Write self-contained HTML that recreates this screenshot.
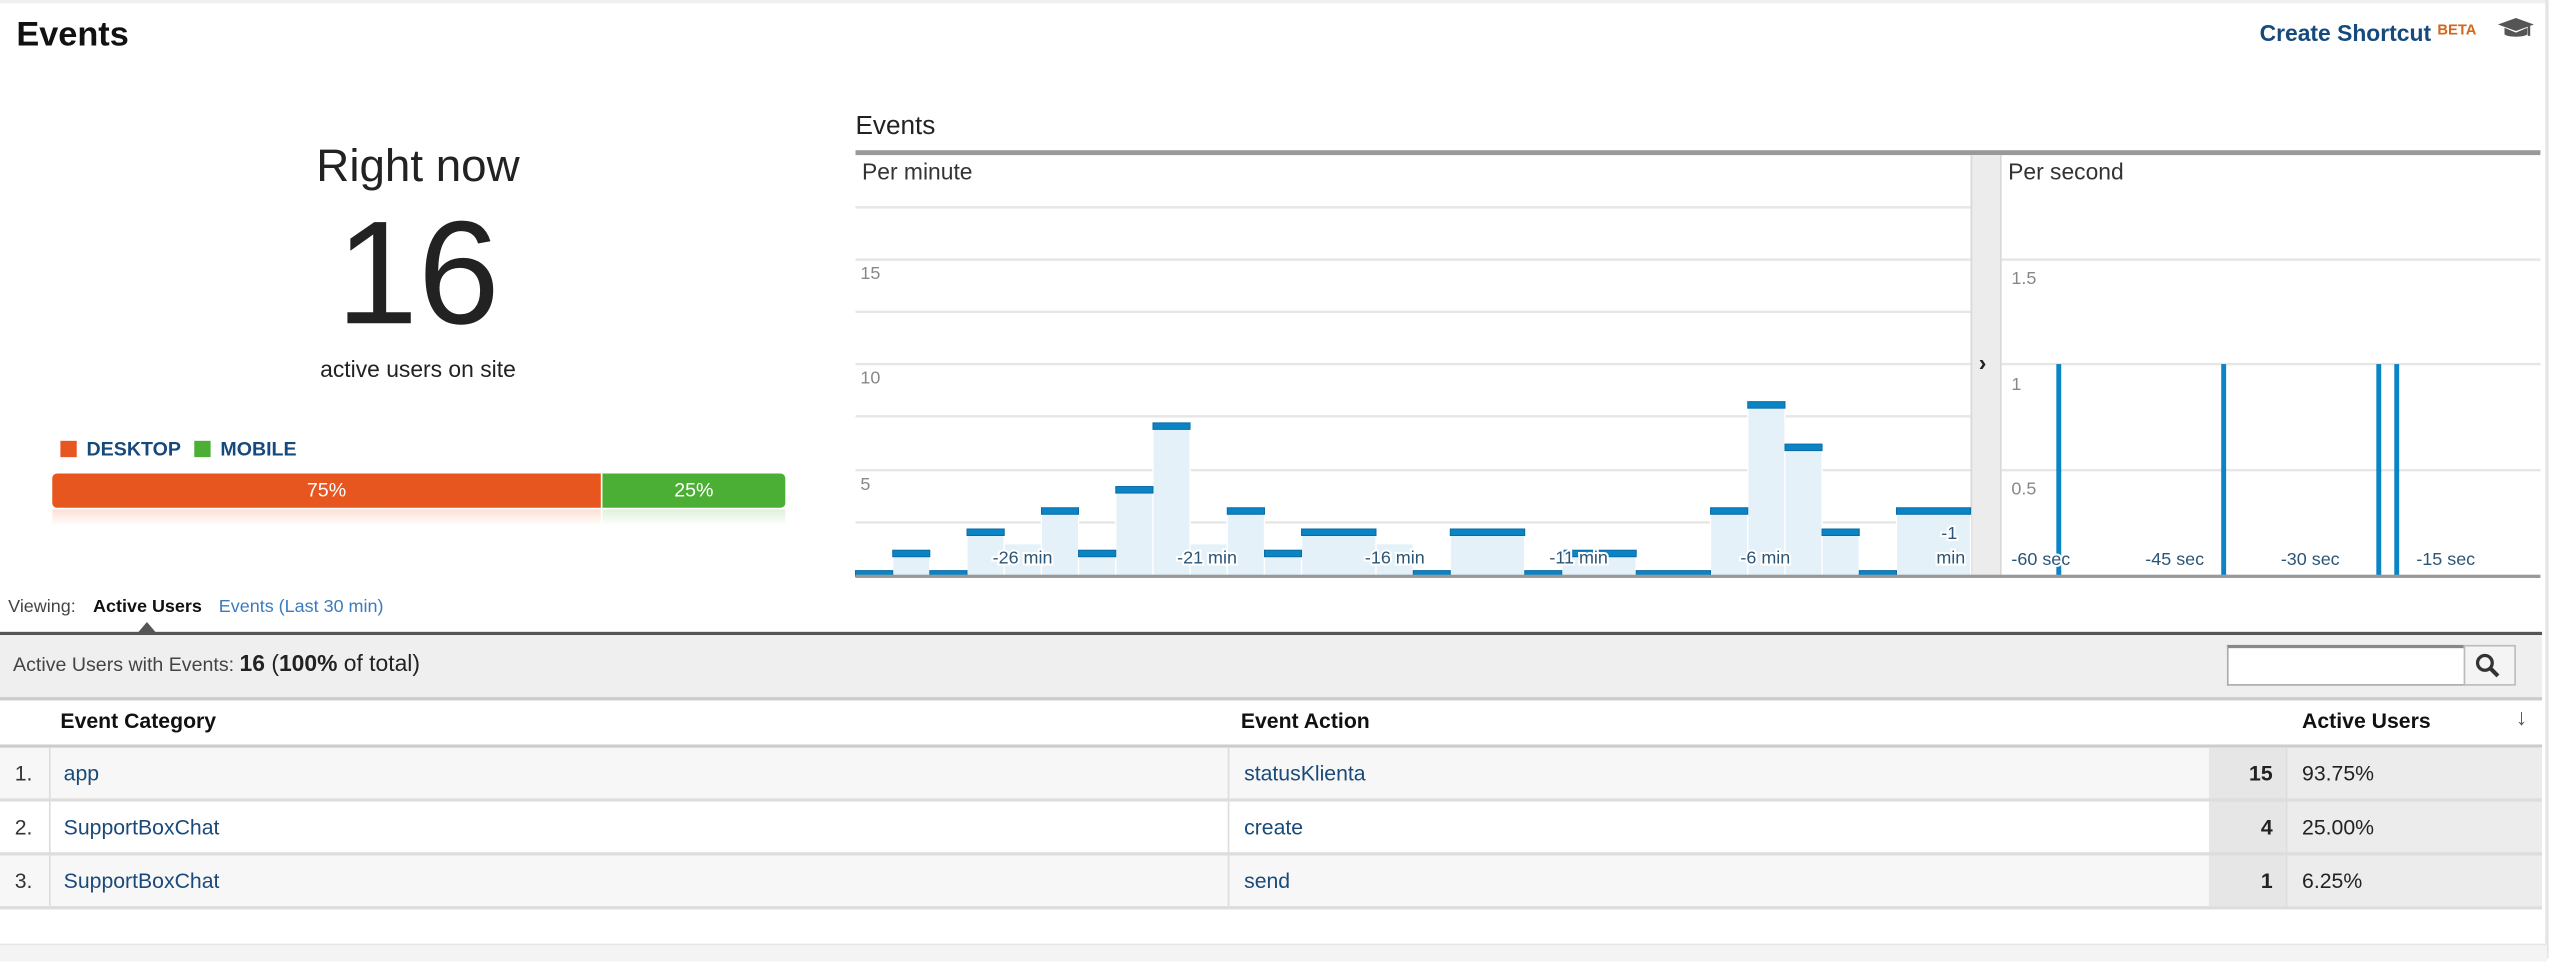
<!DOCTYPE html>
<html><head><meta charset="utf-8"><style>
html,body{margin:0;padding:0;background:#fff;overflow:hidden}
body{width:2560px;height:959px}
#w{position:absolute;left:0;top:0;width:1568px;height:588px;transform:scale(1.632653);transform-origin:0 0;font-family:"Liberation Sans",Arial,sans-serif;color:#222}
.a{position:absolute;white-space:nowrap}
</style></head><body><div id="w">
<div class="a" style="left:0;top:0;width:1560px;height:2px;background:#f0f0f0"></div>
<div class="a" style="left:1559px;top:0;width:2px;height:587px;background:#e4e4e4"></div>
<div class="a" style="left:10px;top:10px;font-size:21px;font-weight:bold;color:#111">Events</div>
<div class="a" style="left:1384px;top:12px;font-size:14px;font-weight:bold;color:#174a7c">Create Shortcut <span style="font-size:9px;color:#d3661a;vertical-align:4px">BETA</span></div>
<svg class="a" style="left:1529px;top:10px" width="24" height="16" viewBox="0 0 24 16"><path d="M1 5L12 1L23 5L12 9Z" fill="#555"/><path d="M5 7v4c2 2 12 2 14 0V7l-7 3z" fill="#555"/><path d="M20 6v6" stroke="#555" stroke-width="1.5"/></svg>

<div class="a" style="left:156px;top:86px;width:200px;text-align:center;font-size:28px;color:#222">Right now</div>
<div class="a" style="left:156px;top:118px;width:200px;text-align:center;font-size:90px;line-height:100px;color:#222">16</div>
<div class="a" style="left:156px;top:218px;width:200px;text-align:center;font-size:14px;color:#222">active users on site</div>
<div class="a" style="left:37px;top:270px;width:10px;height:10px;background:#e8561f"></div>
<div class="a" style="left:53px;top:268px;font-size:12px;font-weight:bold;color:#174a7c">DESKTOP</div>
<div class="a" style="left:119px;top:270px;width:10px;height:10px;background:#4caf35"></div>
<div class="a" style="left:135px;top:268px;font-size:12px;font-weight:bold;color:#174a7c">MOBILE</div>
<div class="a" style="left:32px;top:290px;width:336px;height:21px;background:#e8561f;border-radius:3px 0 0 3px;color:#fff;font-size:12px;line-height:21px;text-align:center">75%</div>
<div class="a" style="left:369px;top:290px;width:112px;height:21px;background:#4caf35;border-radius:0 3px 3px 0;color:#fff;font-size:12px;line-height:21px;text-align:center">25%</div>
<div class="a" style="left:32px;top:312px;width:336px;height:10px;background:linear-gradient(#fbe0d5,#fff)"></div>
<div class="a" style="left:369px;top:312px;width:112px;height:10px;background:linear-gradient(#dff0da,#fff)"></div>

<div class="a" style="left:524px;top:69px;font-size:16px;color:#222">Events</div>
<svg class="a" style="left:0;top:0" width="1568" height="360">
<rect x="524" y="92" width="1032" height="3" fill="#999"/>
<g stroke="#e6e6e6" stroke-width="1.5">
<path d="M524 127H1207M524 159H1207M524 191H1207M524 223H1207M524 255H1207M524 288H1207M524 320H1207"/>
<path d="M1226 159H1556M1226 223H1556M1226 288H1556"/>
</g>
<rect x="1207" y="95" width="18" height="258" fill="#ececec"/>
<rect x="1207" y="95" width="1" height="258" fill="#d8d8d8"/>
<rect x="1225" y="95" width="1" height="258" fill="#d8d8d8"/>
<text x="1212" y="227" font-family="Liberation Sans" font-weight="bold" font-size="14" fill="#222">›</text>
<g font-family="Liberation Sans" font-size="14" fill="#333"><text x="528" y="110">Per minute</text><text x="1230" y="110">Per second</text></g>
<g font-family="Liberation Sans" font-size="11" fill="#888">
<text x="527" y="171">15</text><text x="527" y="235">10</text><text x="527" y="300">5</text>
<text x="1232" y="174">1.5</text><text x="1232" y="239">1</text><text x="1232" y="303">0.5</text>
</g>
<g fill="#e4f1f8" stroke="#fff" stroke-width="0.8">
<rect x="546.8" y="340" width="22.7" height="13"/>
<rect x="592.3" y="327" width="22.8" height="26"/>
<rect x="615.1" y="333" width="22.8" height="20"/>
<rect x="637.9" y="314" width="22.7" height="39"/>
<rect x="660.6" y="340" width="22.8" height="13"/>
<rect x="683.4" y="301" width="22.8" height="52"/>
<rect x="706.2" y="262" width="22.7" height="91"/>
<rect x="728.9" y="333" width="22.8" height="20"/>
<rect x="751.7" y="314" width="22.8" height="39"/>
<rect x="774.5" y="340" width="22.7" height="13"/>
<rect x="797.2" y="327" width="45.6" height="26"/>
<rect x="842.8" y="333" width="22.8" height="20"/>
<rect x="888.3" y="327" width="45.6" height="26"/>
<rect x="956.6" y="340" width="45.6" height="13"/>
<rect x="1047.7" y="314" width="22.8" height="39"/>
<rect x="1070.5" y="249" width="22.8" height="104"/>
<rect x="1093.3" y="275" width="22.7" height="78"/>
<rect x="1116" y="327" width="22.8" height="26"/>
<rect x="1161.6" y="314" width="45.4" height="39"/>
</g>
<g fill="#0a84c4" stroke="#0b6ba3" stroke-width="0.6">
<rect x="524" y="349.5" width="22.8" height="3.5"/>
<rect x="546.8" y="337" width="22.7" height="4"/>
<rect x="569.5" y="349.5" width="22.8" height="3.5"/>
<rect x="592.3" y="324" width="22.8" height="4"/>
<rect x="637.9" y="311" width="22.7" height="4"/>
<rect x="660.6" y="337" width="22.8" height="4"/>
<rect x="683.4" y="298" width="22.8" height="4"/>
<rect x="706.2" y="259" width="22.7" height="4"/>
<rect x="751.7" y="311" width="22.8" height="4"/>
<rect x="774.5" y="337" width="22.7" height="4"/>
<rect x="797.2" y="324" width="45.6" height="4"/>
<rect x="865.6" y="349.5" width="22.7" height="3.5"/>
<rect x="888.3" y="324" width="45.6" height="4"/>
<rect x="933.9" y="349.5" width="22.7" height="3.5"/>
<rect x="956.6" y="337" width="45.6" height="4"/>
<rect x="1002.2" y="349.5" width="45.5" height="3.5"/>
<rect x="1047.7" y="311" width="22.8" height="4"/>
<rect x="1070.5" y="246" width="22.8" height="4"/>
<rect x="1093.3" y="272" width="22.7" height="4"/>
<rect x="1116" y="324" width="22.8" height="4"/>
<rect x="1138.8" y="349.5" width="22.8" height="3.5"/>
<rect x="1161.6" y="311" width="45.4" height="4"/>
</g>
<g fill="#0a84c4"><rect x="1259.5" y="223" width="3" height="130"/><rect x="1360.5" y="223" width="3" height="130"/><rect x="1455.5" y="223" width="3" height="130"/><rect x="1466.5" y="223" width="3" height="130"/></g>
<g font-family="Liberation Sans" font-size="11" fill="#2b5577" stroke="#fff" stroke-width="2.5" paint-order="stroke">
<text x="608" y="345">-26 min</text><text x="721" y="345">-21 min</text><text x="836" y="345">-16 min</text><text x="949" y="345">-11 min</text><text x="1066" y="345">-6 min</text>
<text x="1189" y="330">-1</text><text x="1186" y="345">min</text>
<text x="1232" y="346">-60 sec</text><text x="1314" y="346">-45 sec</text><text x="1397" y="346">-30 sec</text><text x="1480" y="346">-15 sec</text>
</g>
<rect x="524" y="352" width="1032" height="2" fill="#999"/>
</svg>

<div class="a" style="left:5px;top:366px;font-size:11px;color:#444">Viewing:</div>
<div class="a" style="left:57px;top:366px;font-size:11px;font-weight:bold;color:#111">Active Users</div>
<div class="a" style="left:134px;top:366px;font-size:11px;color:#3b7bbd">Events (Last 30 min)</div>
<div class="a" style="left:84px;top:381px;width:0;height:0;border-left:6px solid transparent;border-right:6px solid transparent;border-bottom:7px solid #555"></div>
<div class="a" style="left:0;top:387px;width:1557px;height:2px;background:#555"></div>
<div class="a" style="left:0;top:389px;width:1557px;height:38px;background:#efefef;border-bottom:2px solid #ccc"></div>
<div class="a" style="left:8px;top:398px;font-size:12px;color:#444">Active Users with Events: <span style="font-size:14px;color:#222"><b>16</b> (<b>100%</b> of total)</span></div>
<div class="a" style="left:1364px;top:395px;width:144px;height:22px;background:#fff;border:1px solid #aaa;border-top:2px solid #888"></div>
<div class="a" style="left:1509px;top:395px;width:30px;height:23px;background:#f4f4f4;border:1px solid #bbb"></div>
<svg class="a" style="left:1515px;top:399px" width="18" height="16"><circle cx="7" cy="7" r="4.5" fill="none" stroke="#333" stroke-width="2"/><path d="M10 10l5 5" stroke="#333" stroke-width="2.5"/></svg>

<div class="a" style="left:37px;top:434px;font-size:13px;font-weight:bold;color:#111">Event Category</div>
<div class="a" style="left:760px;top:434px;font-size:13px;font-weight:bold;color:#111">Event Action</div>
<div class="a" style="left:1410px;top:434px;font-size:13px;font-weight:bold;color:#111">Active Users</div>
<div class="a" style="left:1541px;top:431px;font-size:14px;color:#555">↓</div>
<div class="a" style="left:0;top:456px;width:1557px;height:2px;background:#ccc"></div>

<div class="a" style="left:0;top:458px;width:1557px;height:97px;font-size:13px">
 <div class="a" style="left:0;top:0;width:1557px;height:31px;background:#f7f7f7;border-bottom:2px solid #ddd"></div>
 <div class="a" style="left:0;top:33px;width:1557px;height:31px;background:#fff;border-bottom:2px solid #ddd"></div>
 <div class="a" style="left:0;top:66px;width:1557px;height:31px;background:#f7f7f7;border-bottom:2px solid #ddd"></div>
 <div class="a" style="left:30px;top:0;width:1px;height:97px;background:#ddd"></div>
 <div class="a" style="left:752px;top:0;width:1px;height:97px;background:#ddd"></div>
 <div class="a" style="left:1353px;top:0;width:47px;height:97px;background:#e6e6e6"></div>
 <div class="a" style="left:1400px;top:0;width:157px;height:97px;background:#ececec"></div>
 <div class="a" style="left:1400px;top:0;width:1px;height:97px;background:#ddd"></div>
 <div class="a" style="left:1353px;top:31px;width:204px;height:2px;background:#ddd"></div>
 <div class="a" style="left:1353px;top:64px;width:204px;height:2px;background:#ddd"></div>
 <div class="a" style="left:9px;top:8px;color:#333">1.</div>
 <div class="a" style="left:9px;top:41px;color:#333">2.</div>
 <div class="a" style="left:9px;top:74px;color:#333">3.</div>
 <div class="a" style="left:39px;top:8px;color:#1a4a7a">app</div>
 <div class="a" style="left:39px;top:41px;color:#1a4a7a">SupportBoxChat</div>
 <div class="a" style="left:39px;top:74px;color:#1a4a7a">SupportBoxChat</div>
 <div class="a" style="left:762px;top:8px;color:#1a4a7a">statusKlienta</div>
 <div class="a" style="left:762px;top:41px;color:#1a4a7a">create</div>
 <div class="a" style="left:762px;top:74px;color:#1a4a7a">send</div>
 <div class="a" style="left:1353px;top:8px;width:39px;text-align:right;font-weight:bold;color:#222">15</div>
 <div class="a" style="left:1353px;top:41px;width:39px;text-align:right;font-weight:bold;color:#222">4</div>
 <div class="a" style="left:1353px;top:74px;width:39px;text-align:right;font-weight:bold;color:#222">1</div>
 <div class="a" style="left:1410px;top:8px;color:#222">93.75%</div>
 <div class="a" style="left:1410px;top:41px;color:#222">25.00%</div>
 <div class="a" style="left:1410px;top:74px;color:#222">6.25%</div>
</div>
<div class="a" style="left:0;top:578px;width:1560px;height:10px;background:#f4f4f4;border-top:1px solid #e6e6e6"></div>
</div></body></html>
